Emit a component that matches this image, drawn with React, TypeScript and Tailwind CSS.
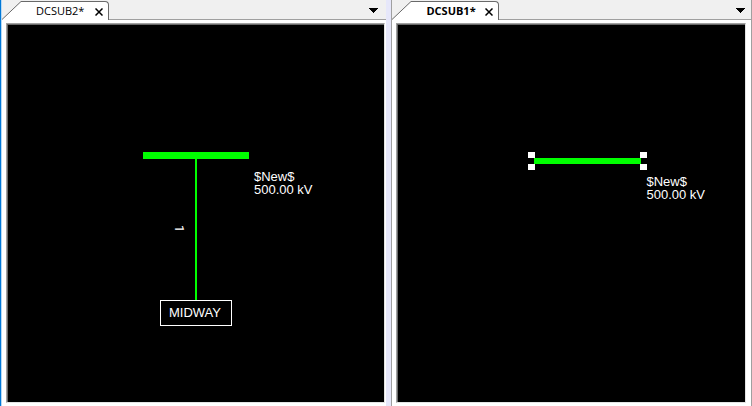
import type { ReactNode } from "react";

type PaneProps = {
  name: string;
  active?: boolean;
  children: ReactNode;
};

function Pane({ name, active = false, children }: PaneProps) {
  return (
    <section className="flex min-w-0 flex-1 flex-col bg-white" aria-label={name}>
      <header className="flex h-5 shrink-0 bg-[#f0f0f0]">
        <div role="tablist" className="flex">
          <svg className="h-5 w-5 shrink-0" viewBox="0 0 20 20" aria-hidden="true">
            <path d="M0 20V19.5L19 1.5H20V20Z" fill="#fff" />
            <path d="M0 19.5L19 1.5H20" fill="none" stroke="#696969" />
          </svg>
          <div className="mt-px flex w-[87px] items-center justify-between rounded-tr-sm border-t border-r border-[#696969] bg-white pr-[5px] pl-3.5">
            <button
              role="tab"
              aria-selected={active}
              className={
                active
                  ? "text-[11px] leading-4 font-bold text-black"
                  : "text-[11px] leading-4 text-black"
              }
            >
              {name}
            </button>
            <button aria-label={`Close ${name}`} className="mt-0.5">
              <svg className="h-2 w-2" viewBox="0 0 8 8" aria-hidden="true">
                <path d="M0.5 0.5L7.5 7.5M7.5 0.5L0.5 7.5" stroke="#000" strokeWidth="1.5" />
              </svg>
            </button>
          </div>
        </div>
        <div
          className={
            active
              ? "flex flex-1 items-center justify-end border-b border-[#a0a0a0] pt-0.5 pr-1.5"
              : "flex flex-1 items-center justify-end border-b border-[#a0a0a0] pt-0.5 pr-2"
          }
        >
          <button aria-label="Open windows">
            <svg className="h-[5px] w-[9px]" viewBox="0 0 9 5" shapeRendering="crispEdges" aria-hidden="true">
              <path d="M0 0H9L4.5 5Z" fill="#000" />
            </svg>
          </button>
        </div>
      </header>
      <div
        className={
          active ? "flex flex-1 pt-[3px] pr-[5px] pb-[3px] pl-1" : "flex flex-1 pt-[3px] pr-px pb-[3px] pl-1"
        }
      >
        <div className="flex flex-1 border border-t-[#a0a0a0] border-r-[#e3e3e3] border-b-[#e3e3e3] border-l-[#a0a0a0]">
          <div className="relative flex-1 overflow-hidden border-t border-l border-[#696969] bg-black text-[13px] leading-[13px] text-white">
            {children}
          </div>
        </div>
      </div>
    </section>
  );
}

function BusLabel() {
  return (
    <>
      $New$
      <br />
      500.00 kV
    </>
  );
}

export default function App() {
  return (
    <main className="flex h-screen bg-[#e6e7fa] font-['Open_Sans','Noto_Sans',sans-serif]">
      <div className="flex min-w-0 flex-[387_1_0%] border-l border-[#0078d7]">
        <div className="flex min-w-0 flex-1 border-l border-[#b9d9f3]">
          <Pane name="DCSUB2*">
            <div className="font-['Liberation_Sans',Arial,sans-serif]">
              <div className="absolute top-[127px] left-[135px] h-[7px] w-[106px] bg-[#00ff00]" />
              <div className="absolute top-[134px] left-[187px] h-[142px] w-0.5 bg-[#00ff00]" />
              <div className="absolute top-[145px] left-[246px] whitespace-nowrap">
                <BusLabel />
              </div>
              <div className="absolute top-[200px] left-[165px] font-['Roboto',sans-serif] [writing-mode:vertical-rl]">
                1
              </div>
              <div className="absolute top-[275px] left-[152px] flex h-[26px] w-[72px] items-center justify-center border border-white pr-0.5 pb-0.5">
                MIDWAY
              </div>
            </div>
          </Pane>
        </div>
      </div>
      <div className="w-[5px] shrink-0" />
      <div className="flex min-w-0 flex-[360_1_0%] border-x border-[#a0a0a0]">
        <Pane name="DCSUB1*" active>
          <div className="font-['Liberation_Sans',Arial,sans-serif]">
            <div className="absolute top-[127px] left-[130px] flex h-[18px] w-[119px] flex-col justify-between">
              <div className="flex justify-between">
                <span className="h-1.5 w-[7px] bg-white" />
                <span className="h-1.5 w-[7px] bg-white" />
              </div>
              <div className="mx-1.5 h-1.5 bg-[#00ff00]" />
              <div className="flex justify-between">
                <span className="h-1.5 w-[7px] bg-white" />
                <span className="h-1.5 w-[7px] bg-white" />
              </div>
            </div>
            <div className="absolute top-[150px] left-[248px] whitespace-nowrap">
              <BusLabel />
            </div>
          </div>
        </Pane>
      </div>
    </main>
  );
}
